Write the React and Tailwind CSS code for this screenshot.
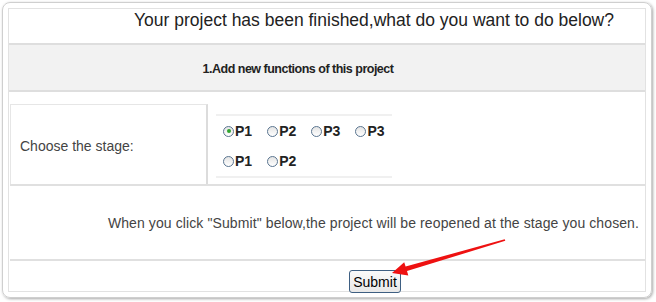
import React from "react";

const stages = [
  [
    { label: "P1", checked: true },
    { label: "P2" },
    { label: "P3" },
    { label: "P3" },
  ],
  [{ label: "P1" }, { label: "P2" }],
];

function Radio({ label, checked }) {
  return (
    <label className="flex items-center text-[14px] leading-[16px] font-bold text-[#222]">
      <span className="w-[11px] h-[11px] rounded-full border border-[#5a7590] bg-gradient-to-b from-[#e4e4e4] to-white flex items-center justify-center mr-[1px]">
        {checked && <span className="w-[4px] h-[4px] rounded-full bg-[#2fa52f]" />}
      </span>
      {label}
    </label>
  );
}

export default function App() {
  return (
    <div
      className="w-[656px] h-[302px] bg-white p-[2px]"
      style={{ fontFamily: '"Liberation Sans", Arial, sans-serif' }}
    >
      <div className="relative w-[650px] h-[296px] rounded-[8px] border border-[#cfcfcf] shadow-[1px_1px_3px_rgba(0,0,0,0.35)] p-[5px]">
        <div className="h-full border border-[#e2e2e2] flex flex-col">
          {/* title */}
          <div className="h-[36px] shrink-0 border-b-2 border-[#dedede] flex justify-end pr-[31px] pt-[1px] text-[17.5px] leading-[20px] text-[#222]">
            Your project has been finished,what do you want to do below?
          </div>

          {/* section header */}
          <div className="h-[47px] shrink-0 bg-[#f2f2f2] border-b-2 border-[#dedede] flex items-center justify-center pt-[3px] text-[12.5px] tracking-[-0.5px] font-bold text-[#222] pr-[58px]">
            1.Add new functions of this project
          </div>

          {/* stage picker */}
          <div className="pt-[12px] pl-[1px] shrink-0">
            <div className="flex h-[82px] border-b-2 border-[#e0e0e0]">
              <div className="w-[198px] border-l border-t border-[#e6e6e6] border-r-2 border-r-[#dcdcdc] flex items-center pl-[9px] pt-[4px] text-[14px] text-[#444]">
                Choose the stage:
              </div>
              <div className="flex-1 ml-[2px] pl-[6px] pt-[10px]">
                <div className="w-[176px] border-t-2 border-b-2 border-[#f0f0f0] pl-[7px] pt-[7px] pb-[7px] flex flex-col gap-[14px]">
                  {stages.map((row, i) => (
                    <div key={i} className="flex gap-[15px]">
                      {row.map((s, j) => (
                        <Radio key={j} {...s} />
                      ))}
                    </div>
                  ))}
                </div>
              </div>
            </div>
          </div>

          {/* note */}
          <div className="h-[75px] shrink-0 border-b-2 border-[#e0e0e0] flex justify-end items-center pr-[6px] pt-[2px] text-[14px] tracking-[0.1px] text-[#444] ml-[1px]">
            When you click "Submit" below,the project will be reopened at the stage you chosen.
          </div>

          {/* submit */}
          <div className="flex-1 flex justify-center items-start pt-[9px] pl-[96px]">
            <button className="px-[3px] h-[23px] border border-[#3e5f82] rounded-[3px] bg-gradient-to-b from-[#fafafa] to-[#e8e8e8] text-[14px] text-black leading-none">
              Submit
            </button>
          </div>
        </div>

        {/* red arrow annotation */}
        <svg
          className="absolute left-0 top-0 pointer-events-none"
          width="650"
          height="296"
          viewBox="0 0 650 296"
        >
          <path
            d="M502.3 237.8 L404 268 L405.3 272.5 L389 270 L401.2 259.2 L402.6 263.6 L501.7 236.2 Z"
            fill="#ee1111"
          />
        </svg>
      </div>
    </div>
  );
}
